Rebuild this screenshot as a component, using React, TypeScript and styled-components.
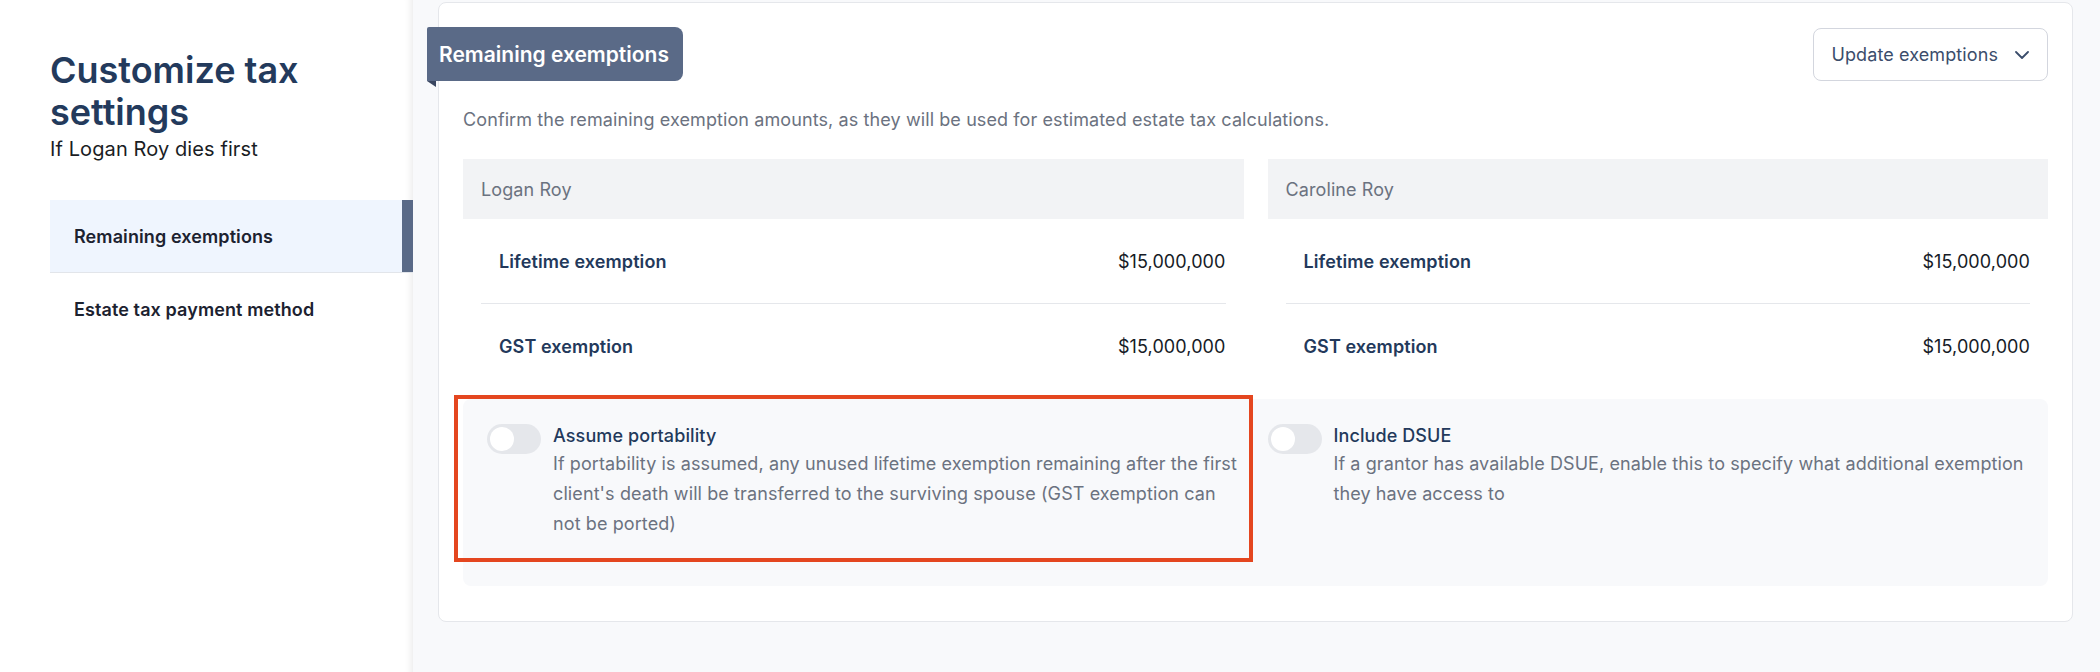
import React from "react";
import styled, { createGlobalStyle } from "styled-components";

const GlobalStyle = createGlobalStyle`
  html, body { margin: 0; padding: 0; }
  body {
    font-family: Inter, "Noto Sans", "Liberation Sans", sans-serif;
    letter-spacing: 0.1px;
    background: #ffffff;
    -webkit-font-smoothing: antialiased;
  }
  * { box-sizing: border-box; }
`;

const Page = styled.div`
  display: flex;
  width: 2100px;
  height: 672px;
  overflow: hidden;
`;

const Sidebar = styled.aside`
  width: 413px;
  flex-shrink: 0;
  background: #ffffff;
  padding: 49px 0 0 50px;
  box-shadow: inset -10px 0 10px -10px rgba(0, 0, 0, 0.12);
`;

const Title = styled.h1`
  margin: 0;
  font-size: 36px;
  line-height: 42px;
  font-weight: 600;
  letter-spacing: 0;
  color: #233a5c;
`;

const Subtitle = styled.div`
  margin-top: 4px;
  font-size: 20px;
  line-height: 24px;
  color: #1a1d24;
`;

const Nav = styled.nav`
  margin-top: 39px;
  display: flex;
  flex-direction: column;
`;

const NavItem = styled.div<{ $active?: boolean; $divider?: boolean }>`
  height: ${(p) => (p.$divider ? 73 : 72)}px;
  display: flex;
  align-items: center;
  padding-left: 24px;
  font-size: 18px;
  font-weight: 600;
  color: #1c2230;
  background: ${(p) => (p.$active ? "#eff5fe" : "transparent")};
  box-shadow: ${(p) => (p.$active ? "inset -11px 0 0 #5a6a87" : "none")};
  border-bottom: ${(p) => (p.$divider ? "1px solid #e2e5ea" : "none")};
`;

const Main = styled.main`
  flex: 1;
  background: #f8f9fb;
  padding: 2px 27px 0 25px;
`;

const Card = styled.section`
  background: #ffffff;
  border: 1px solid #e5e7eb;
  border-radius: 8px;
  padding: 24px 24px 35px;
`;

const CardHeader = styled.div`
  display: flex;
  justify-content: space-between;
  align-items: flex-start;
`;

const Tab = styled.div`
  position: relative;
  margin-left: -36px;
  height: 54px;
  display: flex;
  align-items: center;
  padding: 0 14px 0 12px;
  background: #5a6a87;
  color: #ffffff;
  font-size: 21px;
  font-weight: 600;
  letter-spacing: 0;
  border-radius: 2px 8px 8px 0;

  &::after {
    content: "";
    position: absolute;
    left: 0;
    top: 100%;
    width: 0;
    height: 0;
    border-top: 6px solid #3a4660;
    border-left: 9px solid transparent;
  }
`;

const DropdownButton = styled.button`
  margin-top: 1px;
  height: 53px;
  display: flex;
  align-items: center;
  gap: 17px;
  padding: 0 18px;
  background: #ffffff;
  border: 1px solid #d3d6de;
  border-radius: 8px;
  font-family: inherit;
  font-size: 18px;
  letter-spacing: 0.1px;
  color: #3b4d6b;
  cursor: pointer;
`;

const Description = styled.p`
  margin: 27px 0 0;
  font-size: 18px;
  line-height: 24px;
  color: #6b7280;
`;

const Columns = styled.div`
  margin-top: 27px;
  display: grid;
  grid-template-columns: 1fr 1fr;
  gap: 24px;
`;

const ColumnHeader = styled.div`
  height: 60px;
  display: flex;
  align-items: center;
  padding-left: 18px;
  background: #f2f3f5;
  font-size: 18px;
  color: #6b7280;
`;

const Rows = styled.div`
  padding: 0 18px;
`;

const Row = styled.div<{ $divider?: boolean }>`
  height: ${(p) => (p.$divider ? 85 : 84)}px;
  display: flex;
  align-items: center;
  justify-content: space-between;
  border-bottom: ${(p) => (p.$divider ? "1px solid #e5e7eb" : "none")};
`;

const RowLabel = styled.span`
  padding-left: 18px;
  font-size: 18px;
  font-weight: 600;
  color: #23395b;
`;

const RowValue = styled.span`
  font-size: 18px;
  color: #161b26;
`;

const OptionsPanel = styled.div`
  margin-top: 11px;
  background: #f8f9fb;
  border-radius: 8px;
  padding: 24px 24px 47px;
  display: grid;
  grid-template-columns: 1fr 1fr;
  gap: 24px;
`;

const Option = styled.div`
  position: relative;
  display: flex;
  align-items: flex-start;
  gap: 12px;
`;

const Highlight = styled.div`
  position: absolute;
  top: -28px;
  left: -33px;
  right: -9px;
  bottom: -23px;
  border: 4px solid #e4461f;
  pointer-events: none;
`;

const Toggle = styled.div`
  position: relative;
  flex-shrink: 0;
  margin-top: 1px;
  width: 54px;
  height: 30px;
  border-radius: 15px;
  background: #e5e7eb;

  &::after {
    content: "";
    position: absolute;
    left: 3px;
    top: 3px;
    width: 24px;
    height: 24px;
    border-radius: 50%;
    background: #ffffff;
  }
`;

const OptionText = styled.div`
  display: flex;
  flex-direction: column;
`;

const OptionLabel = styled.div`
  font-size: 18px;
  line-height: 26px;
  font-weight: 500;
  color: #23395b;
`;

const OptionDesc = styled.div`
  font-size: 18px;
  line-height: 30px;
  color: #6b7280;
`;

const Chevron = () => (
  <svg width="14" height="8" viewBox="0 0 14 8" fill="none">
    <polyline
      points="1,1 7,7 13,1"
      stroke="#3b4d6b"
      strokeWidth="1.8"
      strokeLinecap="round"
      strokeLinejoin="round"
    />
  </svg>
);

const people = ["Logan Roy", "Caroline Roy"];

export default function App() {
  return (
    <>
      <GlobalStyle />
      <Page>
        <Sidebar>
          <Title>Customize tax settings</Title>
          <Subtitle>If Logan Roy dies first</Subtitle>
          <Nav>
            <NavItem $active $divider>
              Remaining exemptions
            </NavItem>
            <NavItem>Estate tax payment method</NavItem>
          </Nav>
        </Sidebar>
        <Main>
          <Card>
            <CardHeader>
              <Tab>Remaining exemptions</Tab>
              <DropdownButton>
                Update exemptions
                <Chevron />
              </DropdownButton>
            </CardHeader>
            <Description>
              Confirm the remaining exemption amounts, as they will be used for
              estimated estate tax calculations.
            </Description>
            <Columns>
              {people.map((name) => (
                <div key={name}>
                  <ColumnHeader>{name}</ColumnHeader>
                  <Rows>
                    <Row $divider>
                      <RowLabel>Lifetime exemption</RowLabel>
                      <RowValue>$15,000,000</RowValue>
                    </Row>
                    <Row>
                      <RowLabel>GST exemption</RowLabel>
                      <RowValue>$15,000,000</RowValue>
                    </Row>
                  </Rows>
                </div>
              ))}
            </Columns>
            <OptionsPanel>
              <Option>
                <Highlight />
                <Toggle />
                <OptionText>
                  <OptionLabel>Assume portability</OptionLabel>
                  <OptionDesc>
                    If portability is assumed, any unused lifetime exemption
                    remaining after the first client's death will be transferred
                    to the surviving spouse (GST exemption can not be ported)
                  </OptionDesc>
                </OptionText>
              </Option>
              <Option>
                <Toggle />
                <OptionText>
                  <OptionLabel>Include DSUE</OptionLabel>
                  <OptionDesc>
                    If a grantor has available DSUE, enable this to specify what
                    additional exemption they have access to
                  </OptionDesc>
                </OptionText>
              </Option>
            </OptionsPanel>
          </Card>
        </Main>
      </Page>
    </>
  );
}
